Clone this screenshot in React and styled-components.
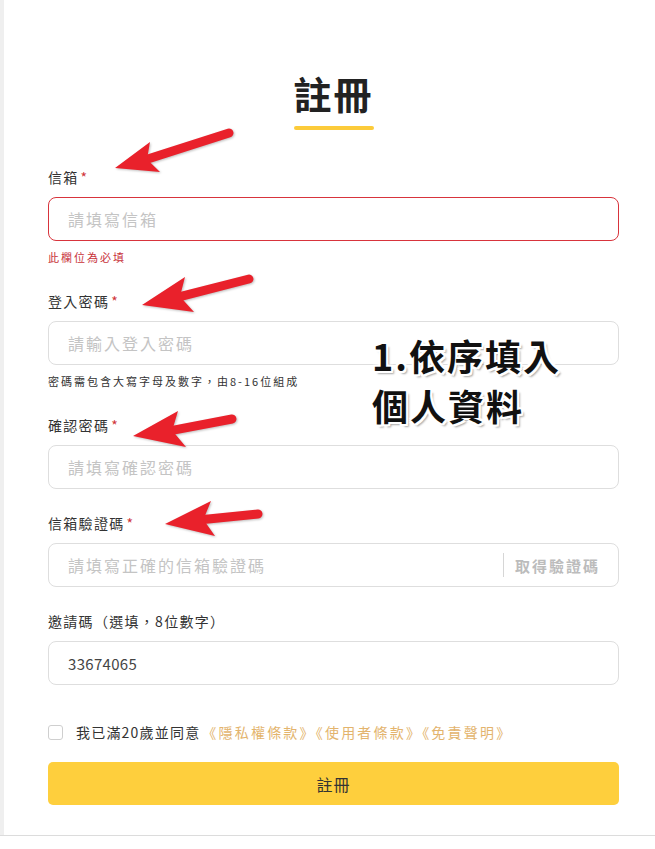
import styled, { createGlobalStyle } from "styled-components";

const GlobalStyle = createGlobalStyle`
  html, body { margin: 0; padding: 0; background: #fff; }
  body { font-family: "Noto Sans CJK TC", "Noto Sans", sans-serif; color: #333; }
  * { box-sizing: border-box; }
`;

const fields = [
  { label: "信箱", required: true, placeholder: "請填寫信箱", error: "此欄位為必填" },
  { label: "登入密碼", required: true, placeholder: "請輸入登入密碼", hint: "密碼需包含大寫字母及數字，由8-16位組成" },
  { label: "確認密碼", required: true, placeholder: "請填寫確認密碼" },
  { label: "信箱驗證碼", required: true, placeholder: "請填寫正確的信箱驗證碼", action: "取得驗證碼" },
  { label: "邀請碼（選填，8位數字）", value: "33674065" },
];

// tip, upper wing, lower wing, tail
const arrows = [
  { tip: [115, 168], a: [150, 142], b: [160, 172], tail: [229, 133] },
  { tip: [142, 305], a: [185, 277], b: [194, 312], tail: [249, 279] },
  { tip: [133, 436], a: [178, 411], b: [186, 447], tail: [232, 419] },
  { tip: [165, 524], a: [211, 501], b: [215, 536], tail: [258, 514] },
];

const Arrow = ({ tip, a, b, tail }) => {
  const mid = [(a[0] + b[0]) / 2, (a[1] + b[1]) / 2];
  const notch = [tip[0] + (mid[0] - tip[0]) * 0.8, tip[1] + (mid[1] - tip[1]) * 0.8];
  return (
    <g>
      <line x1={notch[0]} y1={notch[1]} x2={tail[0]} y2={tail[1]} stroke="#e9212b" strokeWidth="9" strokeLinecap="round" />
      <polygon points={`${tip} ${a} ${notch} ${b}`} fill="#e9212b" />
    </g>
  );
};

const App = () => {
  return (
    <>
      <GlobalStyle />
      <Page>
        <Strip />
        <Main>
          <Title>註冊</Title>
          <TitleBar />
          <Form>
            {fields.map((f) => (
              <Field key={f.label}>
                <Label>
                  {f.label}
                  {f.required && <Star>*</Star>}
                </Label>
                <InputShell $error={!!f.error}>
                  <TextInput placeholder={f.placeholder} defaultValue={f.value} />
                  {f.action && <ActionButton>{f.action}</ActionButton>}
                </InputShell>
                {f.error && <Helper $error>{f.error}</Helper>}
                {f.hint && <Helper>{f.hint}</Helper>}
              </Field>
            ))}
            <Agree>
              <Box />
              <span>我已滿20歲並同意</span>
              <Terms>《隱私權條款》《使用者條款》《免責聲明》</Terms>
            </Agree>
            <Submit>註冊</Submit>
          </Form>
        </Main>
        <Arrows width="655" height="849" viewBox="0 0 655 849">
          {arrows.map((ar, i) => (
            <Arrow key={i} {...ar} />
          ))}
        </Arrows>
        <Note>
          1.依序填入
          <br />
          個人資料
        </Note>
      </Page>
    </>
  );
};
export default App;

const Page = styled.div`
position:relative;
display:flex;
width:655px;
border-bottom:1px solid #dcdcdc;
`;
const Strip = styled.div`
width:4px;
background:#efefef;
`;
const Main = styled.div`
flex:1;
padding:68px 36px 30px 44px;
display:flex;
flex-direction:column;
align-items:center;
`;
const Title = styled.h1`
margin:0;
font-size:38px;
line-height:50px;
font-weight:700;
color:#222;
letter-spacing:2px;
`;
const TitleBar = styled.div`
width:80px;
height:4px;
border-radius:2px;
background:#fccb3a;
margin-top:8px;
`;
const Form = styled.div`
width:100%;
margin-top:37px;
display:flex;
flex-direction:column;
`;
const Field = styled.div`
margin-bottom:24px;
`;
const Label = styled.div`
font-size:14px;
line-height:20px;
color:#333;
margin-bottom:10px;
letter-spacing:1.3px;
`;
const Star = styled.span`
color:#d0343a;
margin-left:2px;
`;
const InputShell = styled.div`
height:44px;
display:flex;
align-items:center;
border:1px solid ${({ $error }) => ($error ? "#d8343c" : "#dedede")};
border-radius:8px;
background:#fff;
padding:0 18px 0 19px;
`;
const TextInput = styled.input`
flex:1;
min-width:0;
border:none;
outline:none;
background:transparent;
padding:0;
font-family:"Noto Sans CJK TC", "Noto Sans", sans-serif;
font-size:15px;
color:#444;
letter-spacing:0.3px;
&::placeholder{
  color:#c4c4c4;
  font-size:16px;
  letter-spacing:2px;
}
`;
const ActionButton = styled.button`
border:none;
border-left:1px solid #d6d6d6;
background:transparent;
height:24px;
padding:0 0 0 11px;
font-family:"Noto Sans CJK TC", "Noto Sans", sans-serif;
font-size:15px;
font-weight:700;
color:#bcbcbc;
letter-spacing:2px;
`;
const Helper = styled.div`
margin-top:6px;
font-size:11px;
line-height:20px;
color:${({ $error }) => ($error ? "#c8323a" : "#333")};
letter-spacing:2px;
`;
const Agree = styled.div`
margin-top:12px;
display:flex;
align-items:center;
font-size:14px;
line-height:22px;
color:#333;
letter-spacing:1.2px;
`;
const Box = styled.span`
width:15px;
height:15px;
border:1px solid #cfcfcf;
border-radius:3px;
margin-right:13px;
`;
const Terms = styled.span`
color:#e3b46d;
letter-spacing:2.2px;
margin-left:2px;
`;
const Submit = styled.button`
margin-top:19px;
height:43px;
border:none;
border-radius:5px;
background:#fecf3d;
font-family:"Noto Sans CJK TC", "Noto Sans", sans-serif;
font-size:16px;
color:#333;
letter-spacing:1px;
`;
const Arrows = styled.svg`
position:absolute;
left:0;
top:0;
pointer-events:none;
filter:drop-shadow(1px 1px 1px rgba(0,0,0,0.25));
`;
const Note = styled.div`
position:absolute;
left:372px;
top:330px;
font-size:36px;
line-height:50px;
font-weight:700;
color:#111;
letter-spacing:2px;
font-family:"Noto Sans CJK TC", "Noto Sans", sans-serif;
text-shadow:
  2px 0 0 #fff, -2px 0 0 #fff, 0 2px 0 #fff, 0 -2px 0 #fff,
  2px 2px 0 #fff, -2px -2px 0 #fff, 2px -2px 0 #fff, -2px 2px 0 #fff,
  3px 3px 2px rgba(0,0,0,0.35);
`;
